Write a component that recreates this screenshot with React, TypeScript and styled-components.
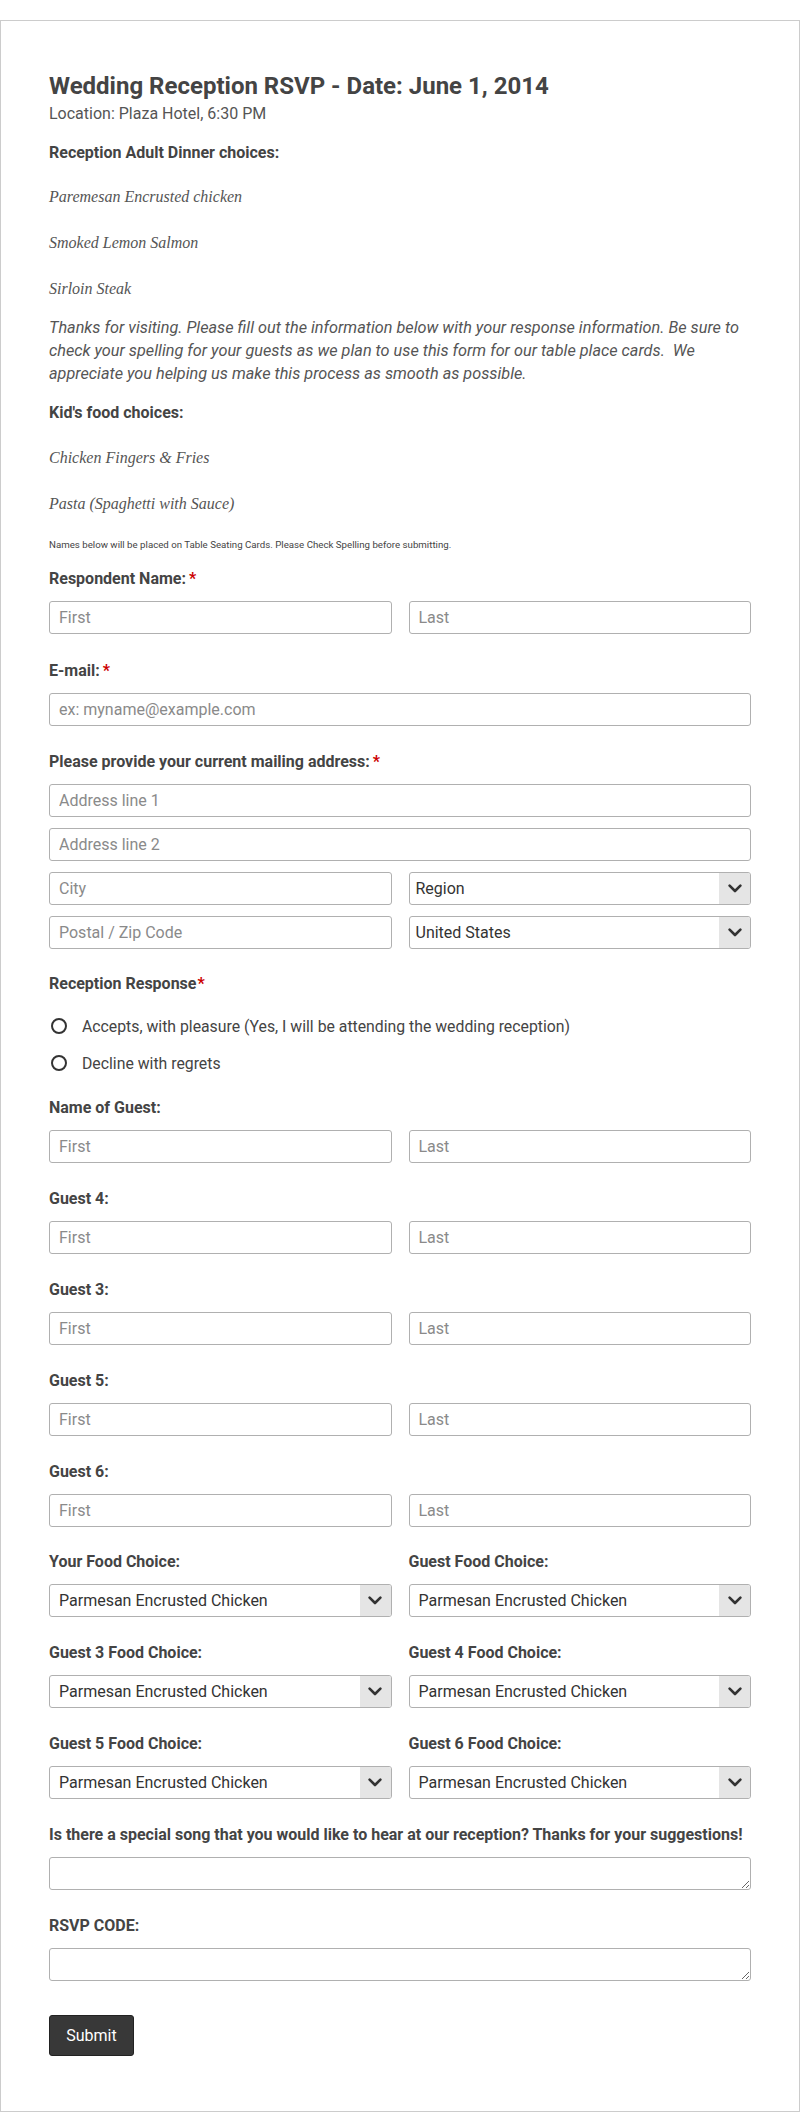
import React from "react";
import styled, { createGlobalStyle } from "styled-components";

const Global = createGlobalStyle`
  html, body { margin: 0; padding: 0; background: #fff; }
  body { font-family: Roboto, "Liberation Sans", Arial, sans-serif; color: #444; }
  * { box-sizing: border-box; }
`;

const Frame = styled.div`
  margin-top: 20px;
  width: 800px;
  border: 1px solid #ccc;
  padding: 51px 48px 55px 48px;
  background: #fff;
`;

const Title = styled.h1`
  margin: 0;
  font-size: 24px;
  line-height: 29px;
  font-weight: 700;
  color: #444;
`;

const Sub = styled.div`
  margin-top: 3px;
  font-size: 16px;
  line-height: 20px;
  color: #555;
`;

const Heading = styled.div<{ $mt: number }>`
  margin-top: ${(p) => p.$mt}px;
  font-size: 16px;
  line-height: 20px;
  font-weight: 700;
  color: #444;
`;

const Dish = styled.div<{ $mt: number }>`
  margin-top: ${(p) => p.$mt}px;
  font-family: "Liberation Serif", "Times New Roman", serif;
  font-style: italic;
  font-size: 16px;
  line-height: 20px;
  color: #555;
`;

const Intro = styled.p`
  margin: 17px 0 0 0;
  font-size: 16.25px;
  line-height: 23px;
  font-style: italic;
  color: #555;
`;

const Note = styled.div`
  margin-top: 25px;
  font-size: 9.7px;
  line-height: 12px;
  color: #444;
`;

const Field = styled.div<{ $mt: number }>`
  margin-top: ${(p) => p.$mt}px;
  display: flex;
  flex-direction: column;
`;

const Label = styled.label`
  display: block;
  font-size: 16px;
  line-height: 20px;
  font-weight: 700;
  color: #444;
  margin-bottom: 12px;
`;

const Req = styled.span<{ $ml?: number }>`
  color: #c00;
  margin-left: ${(p) => (p.$ml ?? 3)}px;
`;

const Stack = styled.div`
  display: flex;
  flex-direction: column;
  gap: 11px;
`;

const Pair = styled.div`
  display: grid;
  grid-template-columns: 1fr 1fr;
  column-gap: 17px;
`;

const Input = styled.input`
  width: 100%;
  height: 33px;
  border: 1px solid #b0b0b0;
  border-radius: 3px;
  padding: 0 9px;
  font-family: Roboto, "Liberation Sans", Arial, sans-serif;
  font-size: 16px;
  color: #333;
  background: #fff;
  outline: none;
  &::placeholder { color: #8a8a8a; }
`;

const Area = styled.textarea`
  display: block;
  width: 100%;
  height: 33px;
  border: 1px solid #b0b0b0;
  border-radius: 3px;
  padding: 6px 9px;
  font-family: Roboto, "Liberation Sans", Arial, sans-serif;
  font-size: 16px;
  resize: vertical;
  outline: none;
  background: #fff;
`;

const SelectBox = styled.div`
  display: flex;
  height: 33px;
  border: 1px solid #b0b0b0;
  border-radius: 3px;
  overflow: hidden;
  background: #fff;
`;

const Select = styled.select<{ $pad: number }>`
  flex: 1;
  min-width: 0;
  appearance: none;
  -webkit-appearance: none;
  border: none;
  outline: none;
  background: transparent;
  padding: 0 ${(p) => p.$pad}px;
  font-family: Roboto, "Liberation Sans", Arial, sans-serif;
  font-size: 16px;
  color: #333;
`;

const Arrow = styled.div`
  width: 31px;
  flex: none;
  background: #e5e5e5;
  display: flex;
  align-items: center;
  justify-content: center;
`;

const RadioRow = styled.label<{ $mt: number }>`
  margin-top: ${(p) => p.$mt}px;
  display: flex;
  align-items: center;
  height: 20px;
  font-size: 15.8px;
  color: #444;
`;

const Radio = styled.input`
  appearance: none;
  -webkit-appearance: none;
  width: 16px;
  height: 16px;
  margin: 0 15px 0 2px;
  border: 2px solid #333;
  border-radius: 50%;
  background: #fff;
`;

const Submit = styled.button`
  margin-top: 34px;
  width: 85px;
  height: 41px;
  background: #383838;
  border: 1px solid #222;
  border-radius: 3px;
  color: #fff;
  font-family: Roboto, "Liberation Sans", Arial, sans-serif;
  font-size: 16px;
  cursor: pointer;
`;

const Chevron = () => (
  <svg width="14" height="9" viewBox="0 0 14 9">
    <polyline points="1.6,1.6 7,7 12.4,1.6" fill="none" stroke="#333" strokeWidth="2.6" strokeLinecap="round" strokeLinejoin="round" />
  </svg>
);

const Dropdown = ({ value, pad }: { value: string; pad: number }) => (
  <SelectBox>
    <Select $pad={pad} defaultValue={value}>
      <option>{value}</option>
    </Select>
    <Arrow>
      <Chevron />
    </Arrow>
  </SelectBox>
);

const NameField = ({ label, mt, req }: { label: string; mt: number; req?: boolean }) => (
  <Field $mt={mt}>
    <Label>
      {label}
      {req && <Req>*</Req>}
    </Label>
    <Pair>
      <Input placeholder="First" />
      <Input placeholder="Last" />
    </Pair>
  </Field>
);

const FoodPair = ({ a, b, mt }: { a: string; b: string; mt: number }) => (
  <Field $mt={mt}>
    <Pair>
      <div>
        <Label>{a}</Label>
        <Dropdown value="Parmesan Encrusted Chicken" pad={9} />
      </div>
      <div>
        <Label>{b}</Label>
        <Dropdown value="Parmesan Encrusted Chicken" pad={9} />
      </div>
    </Pair>
  </Field>
);

export default function App() {
  return (
    <>
      <Global />
      <Frame>
        <Title>Wedding Reception RSVP - Date: June 1, 2014</Title>
        <Sub>Location: Plaza Hotel, 6:30 PM</Sub>
        <Heading $mt={19}>Reception Adult Dinner choices:</Heading>
        <Dish $mt={24}>Paremesan Encrusted chicken</Dish>
        <Dish $mt={26}>Smoked Lemon Salmon</Dish>
        <Dish $mt={26}>Sirloin Steak</Dish>
        <Intro>
          Thanks for visiting. Please fill out the information below with your response information. Be sure to
          check your spelling for your guests as we plan to use this form for our table place cards.{"\u00a0"} We
          appreciate you helping us make this process as smooth as possible.
        </Intro>
        <Heading $mt={18}>Kid's food choices:</Heading>
        <Dish $mt={25}>Chicken Fingers &amp; Fries</Dish>
        <Dish $mt={26}>Pasta (Spaghetti with Sauce)</Dish>
        <Note>Names below will be placed on Table Seating Cards. Please Check Spelling before submitting.</Note>

        <NameField label="Respondent Name:" mt={18} req />

        <Field $mt={27}>
          <Label>
            E-mail:<Req>*</Req>
          </Label>
          <Input placeholder="ex: myname@example.com" />
        </Field>

        <Field $mt={26}>
          <Label>
            Please provide your current mailing address:<Req>*</Req>
          </Label>
          <Stack>
            <Input placeholder="Address line 1" />
            <Input placeholder="Address line 2" />
            <Pair>
              <Input placeholder="City" />
              <Dropdown value="Region" pad={6} />
            </Pair>
            <Pair>
              <Input placeholder="Postal / Zip Code" />
              <Dropdown value="United States" pad={6} />
            </Pair>
          </Stack>
        </Field>

        <Heading $mt={25}>
          Reception Response<Req $ml={1}>*</Req>
        </Heading>
        <RadioRow $mt={22}>
          <Radio type="radio" name="resp" />
          Accepts, with pleasure (Yes, I will be attending the wedding reception)
        </RadioRow>
        <RadioRow $mt={17}>
          <Radio type="radio" name="resp" />
          Decline with regrets
        </RadioRow>

        <NameField label="Name of Guest:" mt={25} />
        <NameField label="Guest 4:" mt={26} />
        <NameField label="Guest 3:" mt={26} />
        <NameField label="Guest 5:" mt={26} />
        <NameField label="Guest 6:" mt={26} />

        <FoodPair mt={25} a="Your Food Choice:" b="Guest Food Choice:" />
        <FoodPair mt={26} a="Guest 3 Food Choice:" b="Guest 4 Food Choice:" />
        <FoodPair mt={26} a="Guest 5 Food Choice:" b="Guest 6 Food Choice:" />

        <Field $mt={26}>
          <Label>Is there a special song that you would like to hear at our reception? Thanks for your suggestions!</Label>
          <Area />
        </Field>
        <Field $mt={26}>
          <Label>RSVP CODE:</Label>
          <Area />
        </Field>

        <Submit type="button">Submit</Submit>
      </Frame>
    </>
  );
}
